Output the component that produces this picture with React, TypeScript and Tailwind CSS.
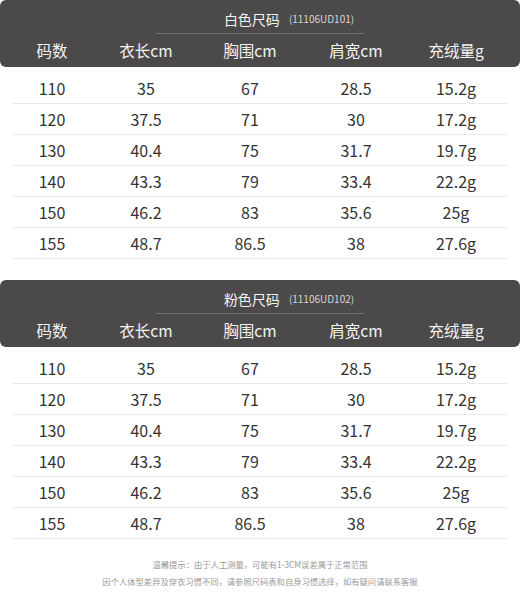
const columns = ["码数", "衣长cm", "胸围cm", "肩宽cm", "充绒量g"]

const rows = [
  ["110", "35", "67", "28.5", "15.2g"],
  ["120", "37.5", "71", "30", "17.2g"],
  ["130", "40.4", "75", "31.7", "19.7g"],
  ["140", "43.3", "79", "33.4", "22.2g"],
  ["150", "46.2", "83", "35.6", "25g"],
  ["155", "48.7", "86.5", "38", "27.6g"],
]

function SizeTable({ title, code }: { title: string; code: string }) {
  return (
    <section>
      <div className="h-[67px] rounded-[6px] bg-[#4b4949] pt-[8px]">
        <div className="flex h-[21px] items-center justify-center pl-[58px] leading-none">
          <span className="text-[14px] text-[#f4f4f4]">{title}</span>
          <span className="ml-[9px] text-[10px] text-[#d6d6d6]">{code}</span>
        </div>
        <div className="mx-auto mt-[4px] h-px w-[208px] bg-[#6f6d6d]" />
        <div className="grid h-[33px] grid-cols-[104px_84px_124px_88px_112px] items-center text-center text-[15.5px] text-[#f4f4f4]">
          {columns.map((c) => (
            <div key={c}>{c}</div>
          ))}
        </div>
      </div>
      <div className="mt-[6px]">
        {rows.map((r) => (
          <div key={r[0]}>
            <div className="grid h-[30px] grid-cols-[104px_84px_124px_88px_112px] items-center text-center text-[16px] text-[#333333]">
              {r.map((v, i) => (
                <div key={i}>{v}</div>
              ))}
            </div>
            <div className="mx-3 h-px bg-[#ebebeb]" />
          </div>
        ))}
      </div>
    </section>
  )
}

export default function App() {
  return (
    <main className="h-[595px] w-[520px] bg-white font-['Noto_Sans_CJK_SC','Noto_Sans',sans-serif]">
      <SizeTable title="白色尺码" code="(11106UD101)" />
      <div className="h-[21px]" />
      <SizeTable title="粉色尺码" code="(11106UD102)" />
      <div className="mt-[17px] flex flex-col items-center text-[8.3px] leading-[17px] text-[#9a9a9a]">
        <p>温馨提示：由于人工测量，可能有1-3CM误差属于正常范围</p>
        <p>因个人体型差异及穿衣习惯不同，请参照尺码表和自身习惯选择，如有疑问请联系客服</p>
      </div>
    </main>
  )
}
